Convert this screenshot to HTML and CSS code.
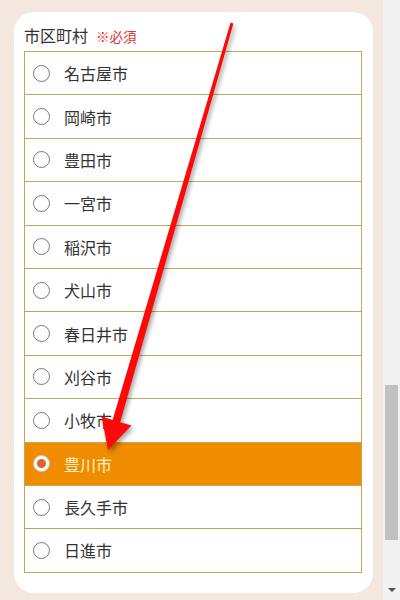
FILE: index.html
```html
<!DOCTYPE html>
<html lang="ja">
<head>
<meta charset="utf-8">
<link rel="stylesheet" href="styles.css">
</head>
<body>
<div class="page">
  <div class="main">
    <div class="card">
      <div class="label">市区町村<span class="req">※必須</span></div>
      <ul class="list">
        <li class="row"><span class="radio"></span><span class="name">名古屋市</span></li>
        <li class="row"><span class="radio"></span><span class="name">岡崎市</span></li>
        <li class="row"><span class="radio"></span><span class="name">豊田市</span></li>
        <li class="row"><span class="radio"></span><span class="name">一宮市</span></li>
        <li class="row"><span class="radio"></span><span class="name">稲沢市</span></li>
        <li class="row"><span class="radio"></span><span class="name">犬山市</span></li>
        <li class="row"><span class="radio"></span><span class="name">春日井市</span></li>
        <li class="row"><span class="radio"></span><span class="name">刈谷市</span></li>
        <li class="row"><span class="radio"></span><span class="name">小牧市</span></li>
        <li class="row selected"><span class="radio"></span><span class="name">豊川市</span></li>
        <li class="row"><span class="radio"></span><span class="name">長久手市</span></li>
        <li class="row"><span class="radio"></span><span class="name">日進市</span></li>
      </ul>
    </div>
  </div>
  <div class="scrollbar">
    <div class="thumb"></div>
    <div class="down"></div>
  </div>
  <svg class="arrow" width="400" height="600" viewBox="0 0 400 600">
    <polygon points="233.4,23.4 120.2,422.3 131.5,425.6 108,450 101.5,416.5 112.6,420.1 230.6,22.6" fill="#ff0808"/>
  </svg>
</div>
</body>
</html>
```

FILE: styles.css
```css
html, body {
  margin: 0;
  padding: 0;
}
body {
  font-family: "Noto Sans CJK JP", "Noto Sans", sans-serif;
  color: #333;
}
.page {
  position: relative;
  display: flex;
  width: 400px;
  height: 600px;
  overflow: hidden;
}
.main {
  flex: 1;
  background: #f3e7df;
  padding: 12px 10px 0 14px;
}
.card {
  width: 359px;
  height: 581px;
  box-sizing: border-box;
  background: #fff;
  border-radius: 20px;
  padding: 13px 11px 0 10px;
}
.label {
  font-size: 16px;
  line-height: 20px;
  height: 20px;
  margin-bottom: 6px;
  color: #333;
  white-space: nowrap;
}
.req {
  color: #e03232;
  font-size: 13.5px;
  margin-left: 8px;
}
.list {
  list-style: none;
  margin: 0;
  padding: 0;
  border: 1px solid #c4a55c;
  border-bottom: none;
}
.row {
  display: flex;
  align-items: center;
  height: 42.4px;
  border-bottom: 1px solid #c4a55c;
  padding-left: 8px;
}
.radio {
  width: 15px;
  height: 15px;
  border: 1px solid #777;
  border-radius: 50%;
  background: #fff;
  box-sizing: content-box;
  position: relative;
  flex-shrink: 0;
}
.name {
  margin-left: 14px;
  font-size: 16px;
  color: #333;
}
.selected {
  background: #ef8c00;
}
.selected .name {
  color: #fff2c8;
}
.selected .radio {
  border-color: #c8c8c8;
}
.selected .radio::after {
  content: "";
  position: absolute;
  left: 3px;
  top: 3px;
  width: 9px;
  height: 9px;
  border-radius: 50%;
  background: #e2602a;
}
.scrollbar {
  width: 17px;
  background: #f1f1f1;
  display: flex;
  flex-direction: column;
  align-items: center;
}
.thumb {
  margin-top: 385px;
  width: 13px;
  height: 155px;
  background: #c1c1c1;
}
.down {
  margin-top: auto;
  margin-bottom: 8px;
  width: 0;
  height: 0;
  border-left: 4px solid transparent;
  border-right: 4px solid transparent;
  border-top: 4px solid #505050;
}
.arrow {
  position: absolute;
  left: 0;
  top: 0;
  pointer-events: none;
  filter: drop-shadow(2px 3px 2px rgba(0, 0, 0, 0.35));
}
```
